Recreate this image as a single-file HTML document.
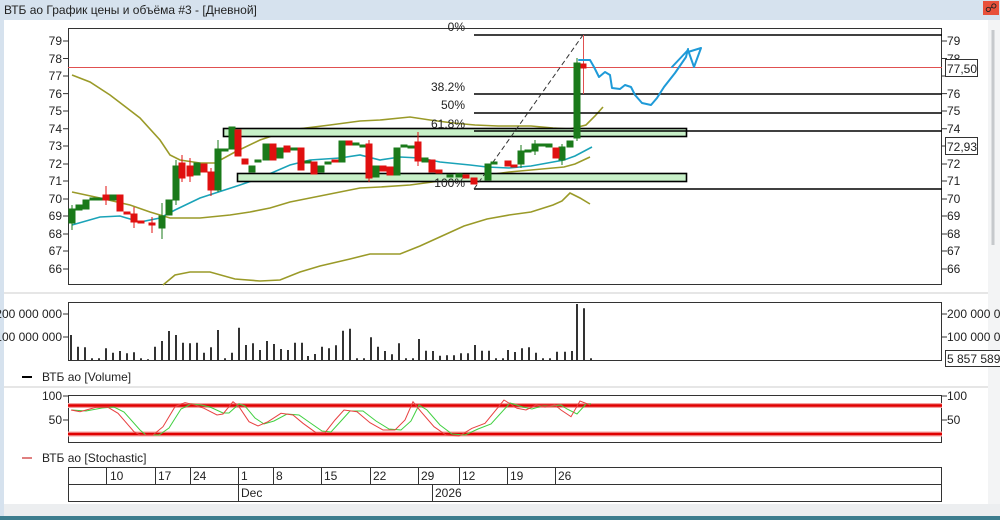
<!DOCTYPE html>
<html><head><meta charset="utf-8"><style>
html,body{margin:0;padding:0;width:1000px;height:520px;overflow:hidden;background:#d6e2ee}
svg{display:block}
text{font-family:"Liberation Sans",sans-serif;font-size:12px;fill:#222}
</style></head><body>
<svg width="1000" height="520" viewBox="0 0 1000 520">
<rect x="0" y="0" width="1000" height="520" fill="#d6e2ee"/>
<text x="4" y="14" font-size="11">ВТБ ао График цены и объёма #3 - [Дневной]</text>
<rect x="983" y="1" width="16" height="14" fill="#e8503a"/>
<text x="985" y="12" font-size="9" fill="#400">&#x260D;</text>
<rect x="4" y="20" width="984" height="484" fill="#fff"/>
<rect x="4" y="504" width="996" height="12" fill="#eceef0"/>
<rect x="0" y="516" width="1000" height="4" fill="#3d7d8e"/>
<rect x="988" y="20" width="12" height="484" fill="#f3f4f5"/>
<line x1="993" y1="30" x2="993" y2="245" stroke="#c6c9cc" stroke-width="3"/>
<line x1="4" y1="293" x2="988" y2="293" stroke="#ccc"/>
<line x1="4" y1="387" x2="988" y2="387" stroke="#ccc"/>

<!-- price pane -->
<rect x="68.5" y="28.5" width="873" height="256" fill="none" stroke="#333"/>
<g font-size="12">
<text x="62" y="45" text-anchor="end">79</text><text x="62" y="63" text-anchor="end">78</text><text x="62" y="80" text-anchor="end">77</text><text x="62" y="98" text-anchor="end">76</text><text x="62" y="115" text-anchor="end">75</text><text x="62" y="133" text-anchor="end">74</text><text x="62" y="150" text-anchor="end">73</text><text x="62" y="168" text-anchor="end">72</text><text x="62" y="185" text-anchor="end">71</text><text x="62" y="203" text-anchor="end">70</text><text x="62" y="220" text-anchor="end">69</text><text x="62" y="238" text-anchor="end">68</text><text x="62" y="255" text-anchor="end">67</text><text x="62" y="273" text-anchor="end">66</text>
<text x="947" y="45">79</text><text x="947" y="63">78</text><text x="947" y="98">76</text><text x="947" y="115">75</text><text x="947" y="133">74</text><text x="947" y="168">72</text><text x="947" y="185">71</text><text x="947" y="203">70</text><text x="947" y="220">69</text><text x="947" y="238">68</text><text x="947" y="255">67</text><text x="947" y="273">66</text>
</g>
<path d="M63 41h5M63 58.5h5M63 76h5M63 93.6h5M63 111h5M63 128.7h5M63 146h5M63 164h5M63 181h5M63 199h5M63 216h5M63 234h5M63 251h5M63 269h5M942 41h5M942 58.5h5M942 76h5M942 93.6h5M942 111h5M942 128.7h5M942 146h5M942 164h5M942 181h5M942 199h5M942 216h5M942 234h5M942 251h5M942 269h5" stroke="#333"/>
<rect x="945.5" y="59.5" width="32" height="17" fill="#fff" stroke="#333"/>
<text x="947" y="73">77,50</text>
<rect x="945.5" y="137.5" width="32" height="17" fill="#fff" stroke="#333"/>
<text x="947" y="151" fill="#3bb">72,93</text>

<line x1="68" y1="67.5" x2="942" y2="67.5" stroke="#e05050"/>
<!-- bollinger -->
<g fill="none" stroke="#9a9a28" stroke-width="1.6">
<polyline points="72,75 90,82 110,95 140,118 160,140 170,155 180,160 200,163 215,163 235,152 260,140 290,130 330,125 360,121 380,120 410,117 430,120 453,123 475,125 498,126 531,126 553,128 570,129 586,125 595,116 603,107"/>
<polyline points="72,192 100,198 130,205 150,212 170,218 200,218 230,215 250,212 270,208 290,202 310,198 340,192 360,188 380,187 410,185 440,181 475,178 487,175 509,172 531,170 564,167 575,164 590,157"/>
<polyline points="163,285 175,275 190,272 210,272 235,279 260,281 280,280 300,272 320,266 350,259 370,254 400,254 420,246 442,236 464,226 487,219 509,215 531,212 553,205 562,201 570,193 580,198 590,204"/>
</g>
<polyline fill="none" stroke="#1aa3b8" stroke-width="1.6" points="72,225 100,217 120,216 140,222 160,218 175,210 200,198 240,185 260,178 290,165 310,160 340,158 360,155 380,160 400,157 420,158 440,162 470,165 487,167 509,168 531,166 564,160 575,156 592,147"/>

<!-- zones -->
<rect x="223.5" y="128.5" width="463" height="8" fill="#c8f0c8" stroke="#000" stroke-width="1.6"/>
<rect x="237.5" y="173.5" width="449" height="8" fill="#c8f0c8" stroke="#000" stroke-width="1.6"/>

<!-- fib -->
<g stroke="#000" stroke-width="1.6">
<line x1="474" y1="35" x2="942" y2="35"/><line x1="474" y1="94" x2="942" y2="94"/><line x1="474" y1="113" x2="942" y2="113"/><line x1="474" y1="131" x2="942" y2="131"/><line x1="474" y1="189" x2="942" y2="189"/>
</g>
<g font-size="12" fill="#333">
<text x="465" y="31" text-anchor="end">0%</text><text x="465" y="91" text-anchor="end">38.2%</text><text x="465" y="109" text-anchor="end">50%</text><text x="465" y="128" text-anchor="end">61.8%</text><text x="465" y="187" text-anchor="end">100%</text>
</g>
<line x1="474" y1="189" x2="583" y2="35" stroke="#333" stroke-dasharray="5,3"/>
<line x1="583.5" y1="35" x2="583.5" y2="94" stroke="#e05050"/>

<!-- candles -->
<g stroke-width="1">
<g fill="#1a7a1a" stroke="#1a7a1a">
<line x1="72" y1="205" x2="72" y2="230"/><rect x="69" y="209" width="6" height="14"/>
<rect x="76" y="205" width="6" height="5"/><rect x="83" y="200" width="6" height="9"/>
<rect x="90" y="198" width="6" height="2"/><rect x="97" y="198" width="6" height="2"/>
<rect x="110" y="195" width="6" height="5"/>
<line x1="162" y1="203" x2="162" y2="239"/><rect x="159" y="216" width="6" height="12"/>
<rect x="166" y="200" width="6" height="15"/><line x1="176" y1="160" x2="176" y2="205"/><rect x="173" y="166" width="6" height="34"/>
<rect x="194" y="163" width="6" height="12"/>
<line x1="218" y1="140" x2="218" y2="192"/><rect x="215" y="149" width="6" height="41"/><rect x="222" y="149" width="6" height="2"/>
<rect x="229" y="127" width="6" height="22"/><rect x="249" y="166" width="6" height="6"/><rect x="255" y="160" width="6" height="2"/>
<rect x="263" y="144" width="6" height="16"/><rect x="277" y="148" width="6" height="10"/><rect x="291" y="148" width="6" height="2"/>
<rect x="305" y="161" width="6" height="2"/><rect x="318" y="166" width="6" height="6"/><rect x="325" y="162" width="6" height="2"/>
<rect x="339" y="141" width="6" height="21"/><rect x="353" y="143" width="6" height="2"/><rect x="360" y="145" width="6" height="2"/>
<rect x="373" y="166" width="6" height="11"/><rect x="394" y="148" width="6" height="27"/><rect x="401" y="145" width="6" height="2"/>
<rect x="408" y="146" width="6" height="2"/><rect x="422" y="158" width="6" height="4"/><rect x="447" y="175" width="6" height="2"/><rect x="456" y="174" width="6" height="3"/>
<rect x="485" y="164" width="6" height="16"/><rect x="491" y="162" width="6" height="2"/>
<line x1="521" y1="145" x2="521" y2="168"/><rect x="518" y="151" width="6" height="13"/><rect x="525" y="150" width="6" height="2"/>
<line x1="535" y1="140" x2="535" y2="155"/><rect x="532" y="144" width="6" height="7"/><rect x="539" y="144" width="6" height="2"/><rect x="546" y="144" width="6" height="3"/>
<line x1="562" y1="144" x2="562" y2="165"/><rect x="559" y="147" width="6" height="13"/><rect x="567" y="141" width="6" height="6"/>
<line x1="577" y1="58" x2="577" y2="141"/><rect x="574" y="63" width="6" height="75"/>
</g>
<g fill="#e01010" stroke="#e01010">
<line x1="106" y1="186" x2="106" y2="205"/><rect x="103" y="195" width="6" height="5"/>
<rect x="117" y="195" width="6" height="16"/><rect x="124" y="212" width="6" height="2"/>
<line x1="134" y1="207" x2="134" y2="228"/><rect x="131" y="214" width="6" height="8"/><rect x="138" y="221" width="6" height="2"/>
<line x1="152" y1="217" x2="152" y2="233"/><rect x="149" y="223" width="6" height="2"/>
<line x1="182" y1="155" x2="182" y2="182"/><rect x="179" y="163" width="6" height="15"/><line x1="190" y1="158" x2="190" y2="182"/><rect x="187" y="166" width="6" height="10"/>
<rect x="201" y="164" width="6" height="8"/><line x1="211" y1="168" x2="211" y2="196"/><rect x="208" y="172" width="6" height="18"/>
<rect x="235" y="130" width="6" height="26"/><rect x="242" y="159" width="6" height="5"/><rect x="270" y="144" width="6" height="16"/>
<rect x="284" y="146" width="6" height="6"/><rect x="298" y="148" width="6" height="22"/><rect x="311" y="162" width="6" height="12"/>
<rect x="332" y="160" width="6" height="2"/><rect x="346" y="141" width="6" height="4"/>
<line x1="369" y1="140" x2="369" y2="182"/><rect x="366" y="144" width="6" height="34"/>
<rect x="380" y="166" width="6" height="5"/><rect x="387" y="167" width="6" height="8"/>
<line x1="418" y1="132" x2="418" y2="166"/><rect x="415" y="142" width="6" height="19"/><rect x="429" y="160" width="6" height="12"/><rect x="436" y="170" width="6" height="3"/>
<rect x="463" y="175" width="6" height="3"/><rect x="471" y="178" width="6" height="6"/>
<rect x="505" y="161" width="6" height="5"/><rect x="511" y="165" width="6" height="2"/>
<rect x="553" y="148" width="6" height="10"/><rect x="581" y="64" width="5" height="4"/>
</g>
</g>

<!-- freehand -->
<g fill="none" stroke="#1e9ad8" stroke-width="2" stroke-linecap="round" stroke-linejoin="round">
<path d="M579 60 L590 60 L594 67 L599 77 L605 72 L610 75 L612 88 L620 89 L625 85 L631 87 L635 95 L642 103 L651 105 L657 98 L664 87 L675 73 L686 57 L688 49"/>
<path d="M672 67 L688 50 L694 67 M694 67 L701 48 L688 52"/>
</g>

<!-- volume pane -->
<rect x="68.5" y="302.5" width="873" height="58" fill="none" stroke="#333"/>
<g font-size="12">
<text x="62" y="318" text-anchor="end">200 000 000</text><text x="62" y="341" text-anchor="end">100 000 000</text>
<text x="947" y="318">200 000 0</text><text x="947" y="341">100 000 0</text>
</g>
<path d="M63 314h5M63 337h5M942 314h5M942 337h5" stroke="#333"/>
<rect x="945.5" y="350.5" width="56" height="16" fill="#fff" stroke="#333"/>
<text x="947" y="363">5 857 589</text>
<path stroke="#000" stroke-width="1.6" d="M71 360V335M78 360V346.7M85 360V347.3M92 360V358.3M99 360V358.3M106 360V348.3M113 360V352.7M120 360V351M127 360V353.3M134 360V352.3M141 360V358.3M148 360V359.3M155 360V346.7M162 360V341M169 360V331M176 360V335M183 360V342.7M190 360V343.3M197 360V342.7M204 360V352.7M211 360V347.3M218 360V330M225 360V358.3M232 360V352.7M239 360V327.7M246 360V345M253 360V343.3M260 360V350M267 360V341M274 360V344M281 360V349M288 360V350M295 360V342.7M302 360V342.7M308 360V356M315 360V354M322 360V346.7M329 360V348.3M336 360V345.3M343 360V330.7M350 360V328.7M357 360V358.3M364 360V358.3M371 360V337.3M378 360V346.7M385 360V351M392 360V354.3M399 360V343.3M406 360V358.3M413 360V358.3M419 360V339M426 360V350.7M433 360V351M440 360V355.7M447 360V355.3M454 360V355.3M461 360V353.3M468 360V353.3M475 360V345M482 360V350.7M489 360V350.7M496 360V358.3M503 360V358.3M508 360V350M515 360V352M522 360V348.3M529 360V347.3M536 360V352.7M543 360V358.3M550 360V358.3M557 360V351.7M565 360V351.7M572 360V351M577 360V304M584 360V308.3M591 360V358.3"/>
<line x1="22" y1="377" x2="32" y2="377" stroke="#000" stroke-width="2"/>
<text x="42" y="381">ВТБ ао [Volume]</text>

<!-- stochastic -->
<rect x="68.5" y="395.5" width="873" height="47" fill="none" stroke="#333"/>
<text x="62" y="400" text-anchor="end">100</text><text x="62" y="424" text-anchor="end">50</text>
<text x="947" y="400">100</text><text x="947" y="424">50</text>
<path d="M63 396h5M63 420h5M942 396h5M942 420h5" stroke="#333"/>
<line x1="68" y1="405.5" x2="942" y2="405.5" stroke="#f4a0a0" stroke-width="5"/>
<line x1="68" y1="405.5" x2="942" y2="405.5" stroke="#e00000" stroke-width="2.5"/>
<line x1="68" y1="434" x2="942" y2="434" stroke="#f4a0a0" stroke-width="5"/>
<line x1="68" y1="434" x2="942" y2="434" stroke="#e00000" stroke-width="2.5"/>
<polyline transform="translate(6,0)" fill="none" stroke="#40d040" stroke-width="1" points="66,410 80,411 96,408 108,407 118,412 134,430 140,435 153,435 163,428 175,409 185,404 195,405 204,407 217,413 223,413 233,404 239,406 249,418 258,424 268,421 281,414 293,415 303,422 316,431 325,432 335,421 344,411 357,411 370,421 383,429 395,430 405,421 413,405 421,410 434,425 446,434 459,435 472,429 485,424 504,403 517,407 526,409 536,406 545,406 555,405 561,409 571,414 580,404 585,404"/>
<polyline fill="none" stroke="#e84040" stroke-width="1" points="71,410 80,411.7 96,407.3 108,407.3 118,413.3 134,431.7 140,435 153,435 163,426.7 175,406.7 185,402.7 195,405 204,408.3 217,415 223,414 233,401.7 239,406.7 249,421.7 258,426 268,421.7 281,413.3 293,415 303,423.3 316,432.7 325,432.7 335,420 344,410 357,411.7 370,422.7 383,430 395,430 405,420 413,401.7 421,411.7 434,426.7 446,435 459,436 472,428.3 485,423.3 504,400 517,408.3 526,410 536,405 545,406.7 555,405 561,410 571,416.7 580,401 590,405"/>
<line x1="22" y1="458" x2="32" y2="458" stroke="#e08080" stroke-width="2"/>
<text x="42" y="462">ВТБ ао [Stochastic]</text>

<!-- dates -->
<g stroke="#333" fill="none">
<rect x="68.5" y="467.5" width="873" height="34"/>
<line x1="68" y1="484.5" x2="942" y2="484.5"/>
<path d="M106.5 467v17M155.5 467v17M190.5 467v17M238.5 467v35M273.5 467v17M321.5 467v17M370.5 467v17M418.5 467v17M432.5 484v18M459.5 467v17M507.5 467v17M555.5 467v17"/>
</g>
<g font-size="12">
<text x="110" y="480">10</text><text x="158" y="480">17</text><text x="193" y="480">24</text><text x="241" y="480">1</text><text x="276" y="480">8</text><text x="324" y="480">15</text><text x="373" y="480">22</text><text x="421" y="480">29</text><text x="462" y="480">12</text><text x="510" y="480">19</text><text x="558" y="480">26</text>
<text x="241" y="497">Dec</text><text x="435" y="497">2026</text>
</g>
</svg>
</body></html>
